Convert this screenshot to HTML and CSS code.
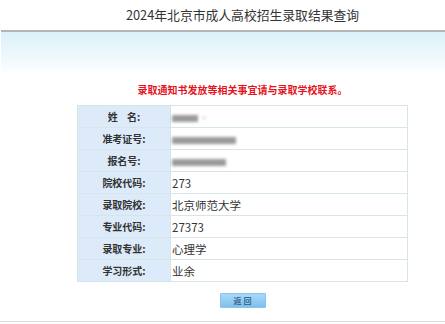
FILE: index.html
```html
<!DOCTYPE html>
<html lang="zh-CN">
<head>
    <meta charset="UTF-8">
    <meta name="viewport" content="width=device-width, initial-scale=1.0">
    <title>2024年北京市成人高校招生录取结果查询</title>
    <link rel="stylesheet" href="styles.css">
</head>
<body>

    <div class="header">
        <div class="content">2024年北京市成人高校招生录取结果查询</div>
    </div>
    <div class="topline"></div>
    <div class="band"></div>

    <div class="content">
        <p class="notice">录取通知书发放等相关事宜请与录取学校联系。</p>

        <table class="result">
            <tr>
                <th>姓&nbsp;&nbsp;&nbsp;&nbsp;名:</th>
                <td><span class="blur name"></span><span class="blur dot"></span></td>
            </tr>
            <tr>
                <th>准考证号:</th>
                <td><span class="blur long"></span></td>
            </tr>
            <tr>
                <th>报名号:</th>
                <td><span class="blur mid"></span></td>
            </tr>
            <tr>
                <th>院校代码:</th>
                <td>273</td>
            </tr>
            <tr>
                <th>录取院校:</th>
                <td>北京师范大学</td>
            </tr>
            <tr>
                <th>专业代码:</th>
                <td>27373</td>
            </tr>
            <tr>
                <th>录取专业:</th>
                <td>心理学</td>
            </tr>
            <tr>
                <th>学习形式:</th>
                <td>业余</td>
            </tr>
        </table>

        <div class="actions">
            <button class="back">返 回</button>
        </div>
    </div>

    <div class="footer"></div>

</body>
</html>
```

FILE: styles.css
```css
body {
    margin: 0;
    padding: 0;
    background-color: #fff;
    color: #333;
    font-family: "Noto Sans CJK SC", "Noto Sans", sans-serif;
}
.content {
    padding-left: 40px;
}
.header {
    height: 30px;
    line-height: 30px;
    font-size: 12.8px;
    text-align: center;
    color: #333;
}
.topline {
    height: 2px;
    margin-left: 1px;
    background-color: #b4b4b4;
}
.band {
    height: 42px;
    margin-left: 1px;
    background: linear-gradient(#dcf1fa, #eef8fc 60%, #fff);
}
.notice {
    margin: 9px 0 0;
    line-height: 14px;
    font-size: 10px;
    font-weight: bold;
    color: #e5131c;
    text-align: center;
}
.result {
    width: 331px;
    margin: 8px auto 0;
    border-collapse: collapse;
    border: 1px solid #d6e6e6;
}
.result tr {
    height: 22px;
}
.result th,
.result td {
    border: 1px solid #d6e6e6;
    padding: 0;
}
.result th {
    width: 92px;
    background-color: #dceafa;
    font-size: 10px;
    font-weight: bold;
    color: #333;
    text-align: center;
}
.result td {
    padding-left: 1px;
    font-size: 11.5px;
    color: #333;
    text-align: left;
}
.blur {
    display: inline-block;
    height: 7px;
    vertical-align: middle;
    background-color: #9a9a9a;
    filter: blur(1.5px);
}
.blur.name {
    width: 26px;
}
.blur.dot {
    width: 2px;
    height: 2px;
    margin-left: 5px;
    background-color: #bbb;
}
.blur.long {
    width: 64px;
}
.blur.mid {
    width: 54px;
}
.actions {
    display: flex;
    justify-content: center;
    margin-top: 11px;
}
.back {
    width: 46px;
    height: 15px;
    padding: 0;
    border: 1px solid #8cc2e8;
    border-radius: 1px;
    background: linear-gradient(#a9d9f9, #7cc0ed);
    font-family: "Noto Sans CJK SC", sans-serif;
    font-size: 8px;
    font-weight: bold;
    line-height: 13px;
    color: #3b6a92;
    cursor: pointer;
}
.footer {
    margin-top: 13px;
    border-top: 1px solid #dcdcdc;
}
```
